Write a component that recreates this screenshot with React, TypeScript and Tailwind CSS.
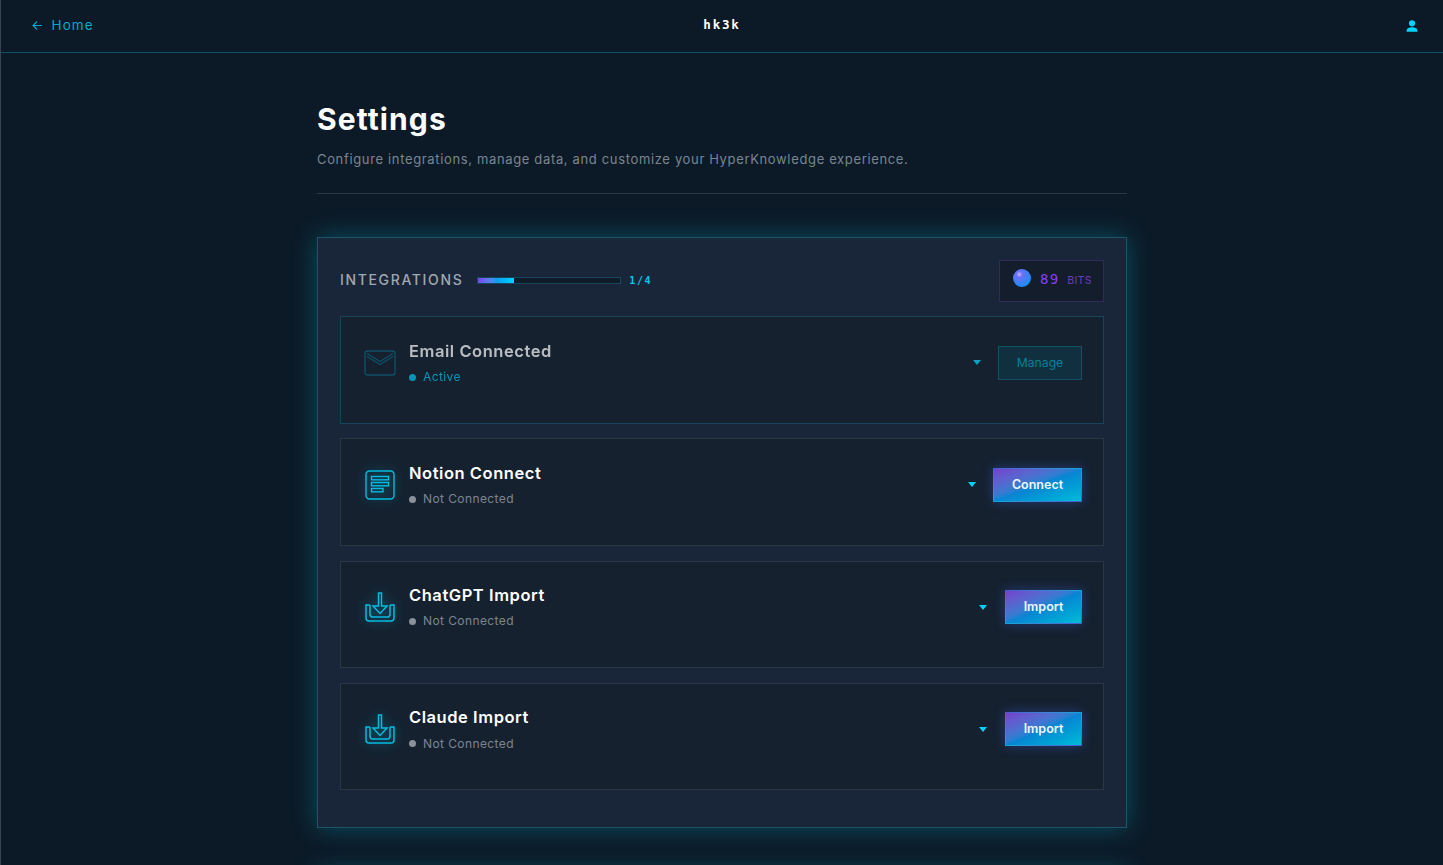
import React from "react";

const sans = "font-['Inter','Noto_Sans',sans-serif]";
const mono = "font-['DejaVu_Sans_Mono','Liberation_Mono',monospace]";

function MailIcon() {
  return (
    <svg width="32" height="28" viewBox="0 0 32 28" fill="none" stroke="currentColor" strokeWidth="1.4">
      <rect x="1" y="2" width="30" height="24" rx="2.5" />
      <path d="M3 4.5l13 8 13-8" />
      <path d="M3 7.5l13 8 13-8" />
    </svg>
  );
}

function NotionIcon() {
  return (
    <svg width="30" height="30" viewBox="0 0 30 30" fill="none" stroke="currentColor" strokeWidth="1.4">
      <rect x="1" y="1" width="28" height="28" rx="3.5" />
      <rect x="6.5" y="6.5" width="17" height="3.3" />
      <rect x="6.5" y="12.5" width="17" height="3.3" />
      <rect x="6.5" y="18.5" width="11.5" height="3.3" />
    </svg>
  );
}

function ImportIcon() {
  return (
    <svg className="-translate-y-[1px]" width="30" height="30" viewBox="0 0 30 30" fill="none" stroke="currentColor" strokeWidth="1.5">
      <path d="M5 13H1v13a3 3 0 0 0 3 3h22a3 3 0 0 0 3-3V13h-4" />
      <path d="M5 13v9a3 3 0 0 0 2 3h16a3 3 0 0 0 2-3v-9" />
      <path d="M13.5 1h3v13h5.5l-7 7.5-7-7.5h5.5z" />
    </svg>
  );
}

function Caret({ dim }: { dim?: boolean }) {
  return (
    <span className={`w-0 h-0 border-l-[4.5px] border-r-[4.5px] border-t-[5px] border-l-transparent border-r-transparent ${dim ? "border-t-[#07a2c2]" : "border-t-[#00d4ff]"}`} />
  );
}

function Row({
  title,
  icon,
  action,
  active,
}: {
  title: string;
  icon: React.ReactNode;
  action: string;
  active?: boolean;
}) {
  return (
    <div
      className={`h-[107.6px] shrink-0 border flex items-start pl-[23px] pr-[21px] pt-[21.6px] bg-[#15212f] ${
        active ? "border-[#17445a]" : "border-[#2b3747]"
      }`}
    >
      <div
        className={`mt-[1.4px] w-[32px] h-[46px] flex items-center justify-center shrink-0 ${
          active ? "text-[#0f4f68]" : "text-[#00bde2] drop-shadow-[0_0_6px_rgba(0,212,255,0.4)]"
        }`}
      >
        {icon}
      </div>
      <div className={`ml-[13px] ${active ? "opacity-70" : ""}`}>
        <div className="text-[16.5px] leading-[24px] font-semibold tracking-[0.55px] text-white">{title}</div>
        <div className="mt-[4.3px] flex items-center text-[12px] leading-[20px] tracking-[0.4px]">
          <span className={`w-[7px] h-[7px] rounded-full ${active ? "bg-[#00c8ee]" : "bg-[#8a919b]"}`} />
          <span className={`ml-[7px] ${active ? "text-[#00c8ee]" : "text-[#7d8591]"}`}>
            {active ? "Active" : "Not Connected"}
          </span>
        </div>
      </div>
      <div className="ml-auto flex items-center h-[34px] mt-[7px]">
        <Caret dim={active} />
        {active ? (
          <button className="ml-[17px] w-[84px] h-[34px] border border-[#0f5266] bg-[#11303f] text-[#0a7f9c] text-[12.2px] font-['Inter',sans-serif]">
            {action}
          </button>
        ) : (
          <div
            className={`${action === "Connect" ? "ml-[17px] w-[89px]" : "ml-[18px] w-[77px]"} h-[34px] p-px bg-gradient-to-tr from-[#00a8d8] via-[#4a5ad0] to-[#00a8d8] shadow-[0_0_12px_rgba(70,110,255,0.35)]`}
          >
            <button className="w-full h-full bg-gradient-to-br from-[#7340cc] via-[#0a84d2] to-[#00bcd8] text-[#f2f6ff] text-[12.5px] font-semibold font-['Inter',sans-serif]">
              {action}
            </button>
          </div>
        )}
      </div>
    </div>
  );
}

export default function App() {
  return (
    <div className={`h-[865px] overflow-hidden bg-[#0c1a27] border-l border-[#3a4450] ${sans}`}>
      <header className="h-[53px] border-b border-[#0c5165] flex items-center justify-between pl-[31px] pr-[23px] pb-[2px] relative">
        <a className="flex items-center text-[#00a9cf] text-[13.5px] tracking-[1.1px]">
          <svg width="11" height="11" viewBox="0 0 11 11" fill="none" stroke="currentColor" strokeWidth="1.1">
            <path d="M10 5.5H1M5 1.5l-4 4 4 4" />
          </svg>
          <span className="ml-[8.5px]">Home</span>
        </a>
        <div className={`absolute left-1/2 -translate-x-1/2 text-white text-[12.5px] font-bold tracking-[1.8px] ${mono}`}>hk3k</div>
        <svg className="translate-y-[1px]" width="16" height="16" viewBox="0 0 24 24" fill="#00d4ff">
          <circle cx="12" cy="8" r="4.6" />
          <path d="M12 14c-3.8 0-8 1.8-8 4v2.5h16V18c0-2.2-4.2-4-8-4z" />
        </svg>
      </header>
      <main className="w-[810px] mx-auto pt-[48px]">
        <h1 className="text-[30px] leading-[36px] font-bold text-white tracking-[1.1px]">Settings</h1>
        <p className="mt-[12px] text-[13px] leading-[20px] tracking-[0.65px] text-[#7b8591]">
          Configure integrations, manage data, and customize your HyperKnowledge experience.
        </p>
        <div className="mt-[24px] h-px bg-[#2a3644]" />
        <section className="mt-[43px] h-[591px] border border-[#1a5568] bg-[#192538] shadow-[0_0_24px_rgba(0,190,220,0.32)] px-[22px] pt-[22px] flex flex-col">
          <div className="flex items-center justify-between h-[42px]">
            <div className="flex items-center -translate-y-[1px]">
              <span className="text-[14px] font-medium tracking-[1.65px] text-[#a0a8b2] -translate-y-[1px]">INTEGRATIONS</span>
              <div className="ml-[14px] w-[144px] h-[7px] border border-[#17475d] bg-[#101b2a]">
                <div className="w-[36px] h-full bg-gradient-to-r from-[#7a3ff0] via-[#0d9bf0] to-[#00d4ff]" />
              </div>
              <span className={`ml-[8px] text-[10px] font-bold tracking-[1.6px] text-[#00c8f0] ${mono}`}>1/4</span>
            </div>
            <div className="w-[105px] h-[42px] border border-[#302b5c] bg-[#131d2c] flex items-center pl-[13px]">
              <span className="-translate-y-[3px] w-[18px] h-[18px] rounded-full bg-[radial-gradient(circle_at_35%_30%,#c7b6ff_0%,#6a70f5_18%,#1f8cf5_70%,#12b6f0_100%)]" />
              <span className={`-translate-y-[2px] ml-[9px] text-[14px] tracking-[1.2px] text-[#8a3ff0] ${mono}`}>89</span>
              <span className="ml-[8px] text-[10.5px] tracking-[0.3px] text-[#6a3cc0]">BITS</span>
            </div>
          </div>
          <div className="mt-[14.2px] flex flex-col gap-[14.6px]">
            <Row title="Email Connected" icon={<MailIcon />} action="Manage" active />
            <Row title="Notion Connect" icon={<NotionIcon />} action="Connect" />
            <Row title="ChatGPT Import" icon={<ImportIcon />} action="Import" />
            <Row title="Claude Import" icon={<ImportIcon />} action="Import" />
          </div>
        </section>
        <section className="mt-[44px] h-[200px] border border-[#1a5568] bg-[#192538] shadow-[0_0_24px_rgba(0,190,220,0.32)]" />
      </main>
    </div>
  );
}
